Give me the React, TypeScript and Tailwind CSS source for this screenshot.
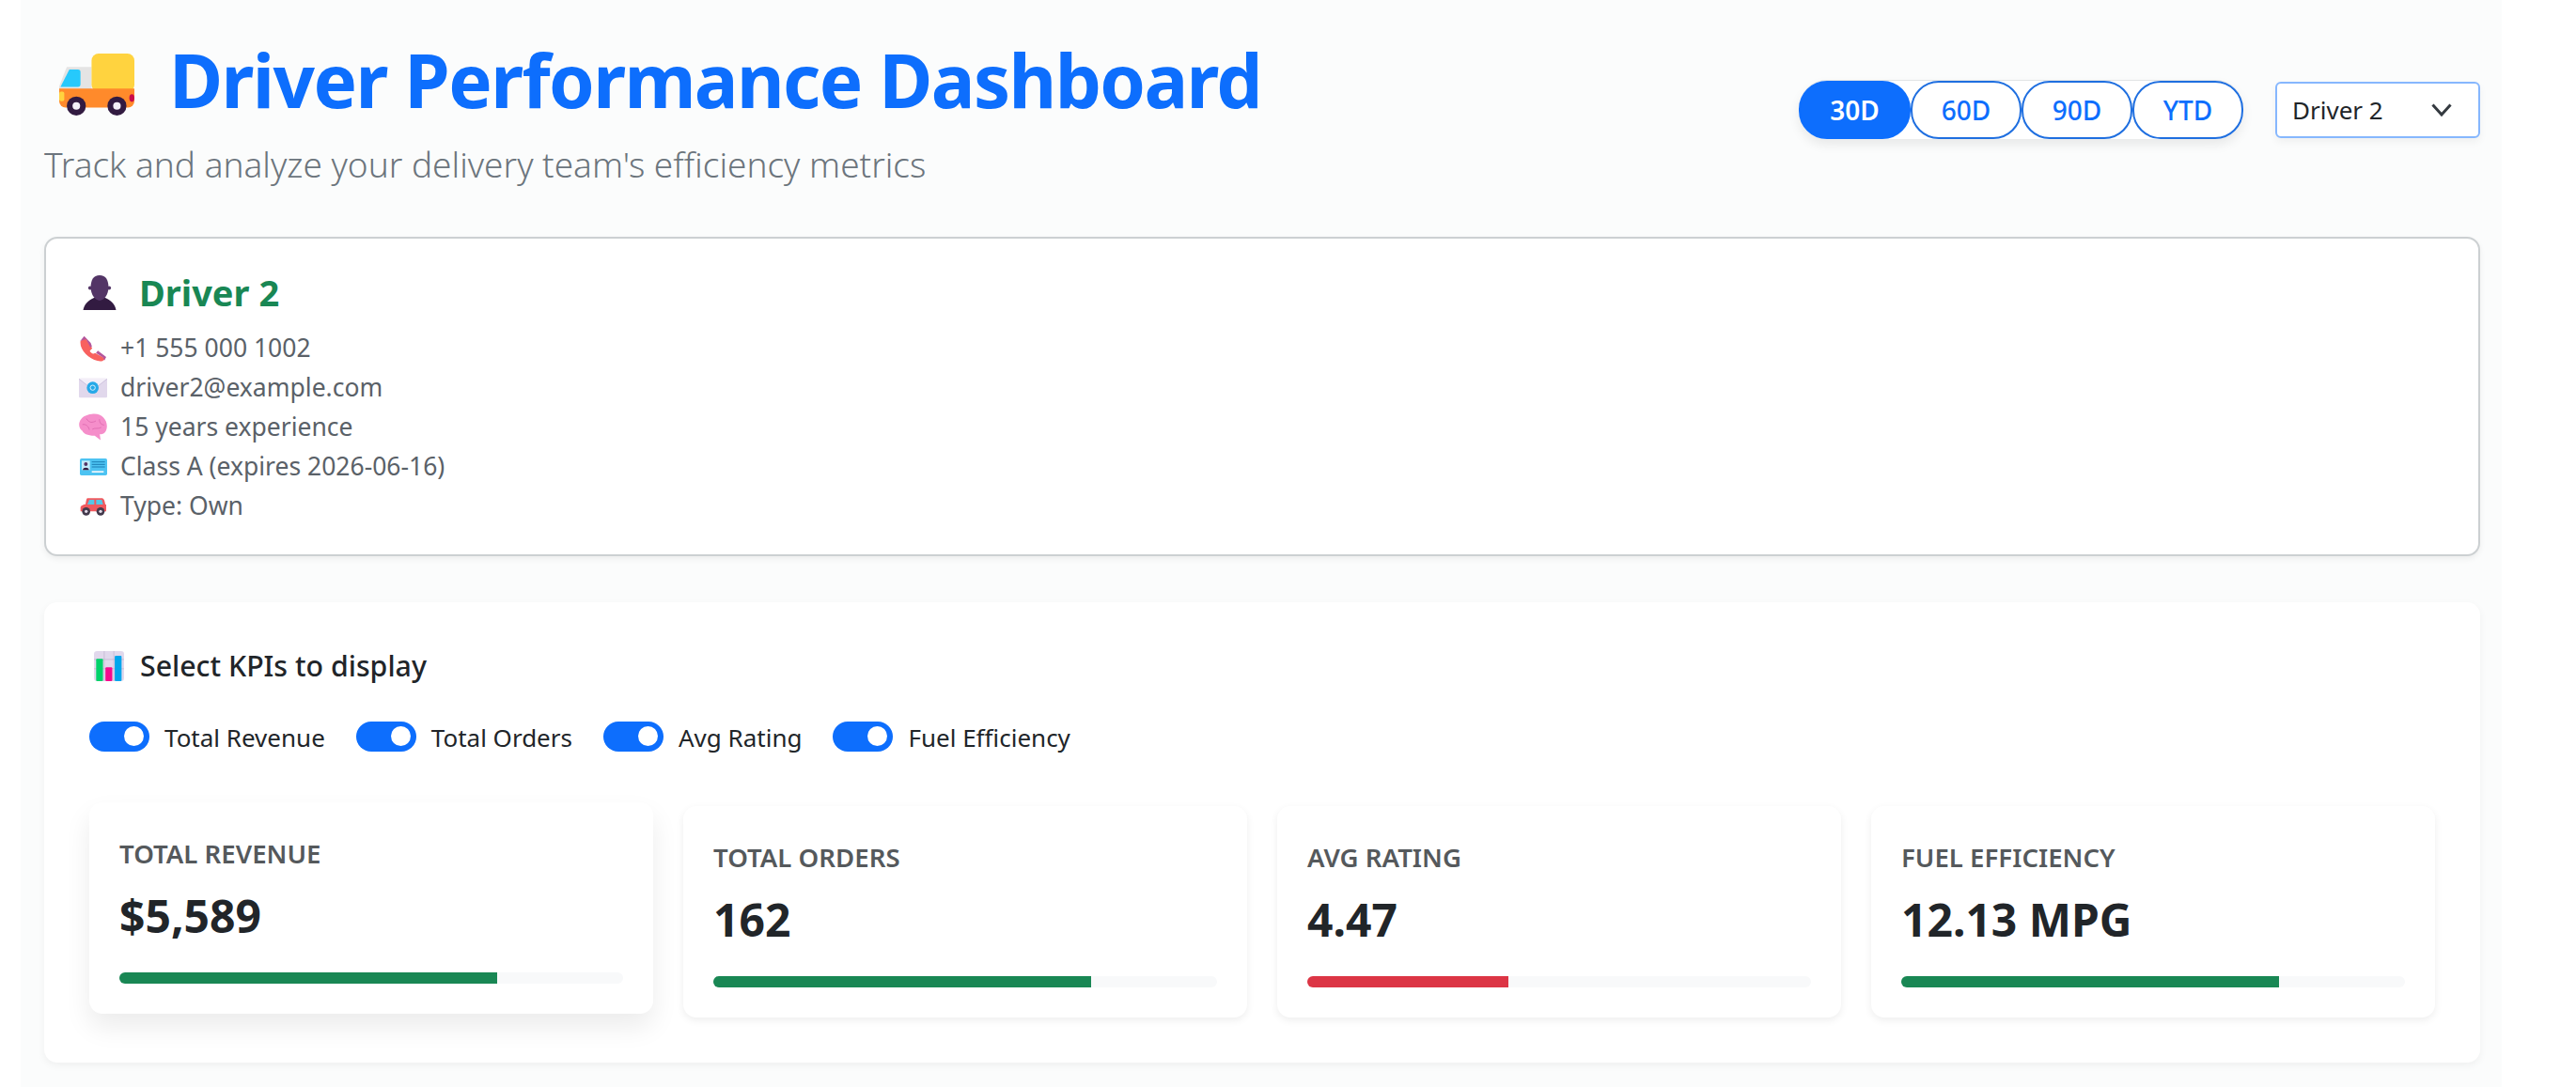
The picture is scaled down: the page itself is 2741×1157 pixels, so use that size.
import React from "react";

const Truck = () => (
  <svg width="80" height="66" viewBox="38 40 237 195" className="shrink-0 mt-[10px]">
    <path d="M62 82H140V160H38V143Z" fill="#E4E4E4" />
    <rect x="140" y="40" width="135" height="120" rx="22" fill="#FFD33F" />
    <path d="M70 90H97a8 8 0 0 1 8 8V137a8 8 0 0 1-8 8H42Z" fill="#26C9FC" />
    <path d="M38 150H275V190a20 20 0 0 1-20 20H58a20 20 0 0 1-20-20Z" fill="#FF8A2B" />
    <rect x="38" y="160" width="16" height="30" rx="6" fill="#FFD33F" />
    <ellipse cx="267" cy="180" rx="8" ry="12" fill="#CA0B4A" />
    <circle cx="92" cy="205" r="30" fill="#321B41" />
    <circle cx="92" cy="205" r="12" fill="#F4F0F8" />
    <circle cx="220" cy="205" r="30" fill="#321B41" />
    <circle cx="220" cy="205" r="12" fill="#F4F0F8" />
  </svg>
);

const Person = () => (
  <svg width="36" height="37" viewBox="28 22 104 110" className="shrink-0">
    <path d="M28 132C32 108 52 98 66 92H94C108 98 128 108 132 132Z" fill="#321B41" />
    <circle cx="50" cy="62" r="6" fill="#533566" />
    <circle cx="110" cy="62" r="6" fill="#533566" />
    <path d="M80 22C100 22 108 38 108 60C108 84 94 102 80 102C66 102 52 84 52 60C52 38 60 22 80 22Z" fill="#533566" />
  </svg>
);

const Phone = () => (
  <svg width="28" height="28" viewBox="18 215 85 83">
    <path d="M20 232L36 222L58 256L50 264C54 271 60 276 67 271L100 288C96 297 85 299 75 296C45 288 16 260 20 232Z" fill="#F8615F" />
    <path d="M19 232L32 216L53 238L57 250L52 253L38 226Z" fill="#B4569C" />
    <path d="M76 263L103 284L97 295L94 286L70 271Z" fill="#B4569C" />
  </svg>
);

const Envelope = () => (
  <svg width="30" height="22" viewBox="16 25 90 62">
    <rect x="16" y="25" width="90" height="62" rx="4" fill="#E1D8EC" />
    <path d="M17 26H105L61 62Z" fill="#F3EEF8" />
    <path d="M16 27L61 62L106 27" fill="none" stroke="#CFC4DE" strokeWidth="3" />
    <circle cx="60" cy="55" r="19" fill="#26A9E8" />
    <circle cx="60" cy="55" r="8" fill="none" stroke="#D8F0FC" strokeWidth="3" />
  </svg>
);

const Brain = () => (
  <svg width="30" height="30" viewBox="15 140 95 92">
    <path d="M58 141C90 135 112 160 109 186C107 205 94 211 85 208L88 229L68 214C42 214 30 206 27 198C18 192 13 180 17 168C22 152 38 143 58 141Z" fill="#F58ECA" />
    <path d="M40 156C50 172 60 170 72 164M84 158C84 172 90 176 100 178M27 176C38 174 48 182 50 194M60 192C70 186 80 192 90 186" fill="none" stroke="#D45CA5" strokeWidth="2" />
  </svg>
);

const IdCard = () => (
  <svg width="29" height="18" viewBox="18 53 87 54">
    <rect x="18" y="53" width="87" height="54" rx="5" fill="#4DC3F2" />
    <rect x="24" y="60" width="26" height="30" fill="#C4ECFB" />
    <circle cx="37" cy="71" r="6" fill="#533566" />
    <path d="M27 90C28 80 46 80 47 90Z" fill="#321B41" />
    <path d="M56 64H98M56 72H98M56 80H98" stroke="#1C7FB5" strokeWidth="3" />
    <rect x="56" y="93" width="38" height="5" fill="#F4F8FB" />
  </svg>
);

const Car = () => (
  <svg width="29" height="20" viewBox="18 172 87 60">
    <path d="M42 176H88C94 176 97 182 99 196H102V218H20V204C22 198 30 196 36 195C38 186 39 176 42 176Z" fill="#F0595E" />
    <path d="M48 181H64V196H42ZM70 181H88L92 196H70Z" fill="#56C7E6" />
    <circle cx="38" cy="218" r="13" fill="#433A4C" />
    <circle cx="38" cy="218" r="5" fill="#E4DCE9" />
    <circle cx="84" cy="218" r="13" fill="#433A4C" />
    <circle cx="84" cy="218" r="5" fill="#E4DCE9" />
  </svg>
);

const Chart = () => (
  <svg width="32" height="32" viewBox="33 25 97 97" className="shrink-0">
    <rect x="33" y="25" width="97" height="97" rx="10" fill="#E1D8EC" />
    <path d="M66 25V122M97 25V122M33 52H130M33 82H130" stroke="#BEB3CC" strokeWidth="2" />
    <rect x="40" y="50" width="22" height="72" rx="3" fill="#00D26A" />
    <rect x="70" y="77" width="22" height="45" rx="3" fill="#F70A8D" />
    <rect x="100" y="40" width="22" height="82" rx="3" fill="#00A6ED" />
  </svg>
);

const details: [React.ReactNode, string][] = [
  [<Phone />, "+1 555 000 1002"],
  [<Envelope />, "driver2@example.com"],
  [<Brain />, "15 years experience"],
  [<IdCard />, "Class A (expires 2026-06-16)"],
  [<Car />, "Type: Own"],
];

const toggles = ["Total Revenue", "Total Orders", "Avg Rating", "Fuel Efficiency"];

const kpis = [
  { label: "Total Revenue", value: "$5,589", pct: 75, red: false, hover: true },
  { label: "Total Orders", value: "162", pct: 75, red: false, hover: false },
  { label: "Avg Rating", value: "4.47", pct: 40, red: true, hover: false },
  { label: "Fuel Efficiency", value: "12.13 MPG", pct: 75, red: false, hover: false },
];

export default function App() {
  return (
    <div className="bg-white min-h-[1157px] pl-[22px] pr-[79px] font-['Noto_Sans',sans-serif]">
      <div className="bg-[#fbfcfc] min-h-[1157px] pt-[37px] pl-[25px] pr-[23px] pb-[26px]">
        <header className="flex items-center justify-between mb-[56px]">
          <div>
            <h1 className="flex items-center gap-[37px] pl-[16px] text-[78px] leading-[96px] font-bold text-[#0d6efd] tracking-[-1.6px]">
              <Truck />
              <span>Driver Performance Dashboard</span>
            </h1>
            <p className="mt-[21px] text-[37px] leading-[42px] font-light text-[#6c757d]">
              Track and analyze your delivery team's efficiency metrics
            </p>
          </div>
          <div className="flex items-center gap-[34px]">
            <div className="flex bg-white rounded-[30px] border-t border-[#e2e4e6] shadow-[0_6px_12px_rgba(0,0,0,0.08)]">
              {["30D", "60D", "90D", "YTD"].map((t, i) => (
                <button
                  key={t}
                  className={
                    i === 0
                      ? "w-[119px] h-[62px] rounded-[30px] border-2 border-[#0d6efd] bg-[#0d6efd] text-white text-[28px] font-semibold"
                      : "w-[118px] h-[62px] rounded-[30px] border-2 border-[#1f6fe0] bg-white text-[#0d6efd] text-[28px] font-medium"
                  }
                >
                  {t}
                </button>
              ))}
            </div>
            <div className="w-[218px] h-[60px] bg-white rounded-[6px] border-2 border-[#86b7fe] shadow-[0_4px_8px_rgba(0,0,0,0.05)] flex items-center justify-between pl-[16px] pr-[28px] text-[26px] text-[#212529]">
              <span className="mt-[2px]">Driver 2</span>
              <svg width="22" height="14" viewBox="0 0 22 14" fill="none" stroke="#343a40" strokeWidth="3">
                <path d="M1.5 1.5L11 12L20.5 1.5" />
              </svg>
            </div>
          </div>
        </header>

        <section className="h-[340px] bg-white rounded-[14px] border-2 border-[#ccd0d2] shadow-[0_3px_6px_rgba(0,0,0,0.06)] pt-[32px] pl-[35px] pr-[32px]">
          <div className="flex items-center gap-[24px] pl-[4px] h-[50px] mb-[14px]">
            <Person />
            <h2 className="text-[38px] leading-[50px] font-bold text-[#198754]">Driver 2</h2>
          </div>
          {details.map(([icon, text]) => (
            <div key={text} className="flex items-center gap-[14px] h-[42px] text-[26.5px] text-[#5a6168]">
              <span className="w-[30px] flex justify-center">{icon}</span>
              <span>{text}</span>
            </div>
          ))}
        </section>

        <section className="mt-[49px] h-[490px] bg-white rounded-[14px] shadow-[0_3px_8px_rgba(0,0,0,0.05)] pt-[47px] px-[48px]">
          <div className="flex items-center gap-[17px] pl-[5px] h-[42px] text-[30.3px] font-medium text-[#212529]">
            <Chart />
            <span>Select KPIs to display</span>
          </div>
          <div className="flex items-center gap-[33px] h-[42px] mt-[34px]">
            {toggles.map((t) => (
              <label key={t} className="flex items-center gap-[16px] text-[26px] text-[#212529]">
                <span className="w-[64px] h-[32px] rounded-full bg-[#0d6efd] flex items-center justify-end pr-[6px] -mt-[3px]">
                  <span className="w-[21px] h-[21px] rounded-full bg-white" />
                </span>
                <span>{t}</span>
              </label>
            ))}
          </div>
          <div className="grid grid-cols-4 gap-[32px] mt-[52px]">
            {kpis.map((k) => (
              <div
                key={k.label}
                className={
                  k.hover
                    ? "h-[225px] bg-white rounded-[14px] px-[32px] pt-[35px] -translate-y-[4px] shadow-[0_14px_28px_rgba(0,0,0,0.08)]"
                    : "h-[225px] bg-white rounded-[14px] px-[32px] pt-[35px] shadow-[0_3px_8px_rgba(0,0,0,0.07)]"
                }
              >
                <div className="text-[27.6px] leading-[39px] font-semibold uppercase text-[#55595c]">{k.label}</div>
                <div className="mt-[14px] text-[48px] leading-[66px] font-bold text-[#212529]">{k.value}</div>
                <div className="mt-[27px] h-[12px] rounded-full bg-[#f8f9fa] overflow-hidden">
                  <div
                    className={k.red ? "h-full bg-[#dc3545]" : "h-full bg-[#198754]"}
                    style={{ width: `${k.pct}%` }}
                  />
                </div>
              </div>
            ))}
          </div>
        </section>
      </div>
    </div>
  );
}
